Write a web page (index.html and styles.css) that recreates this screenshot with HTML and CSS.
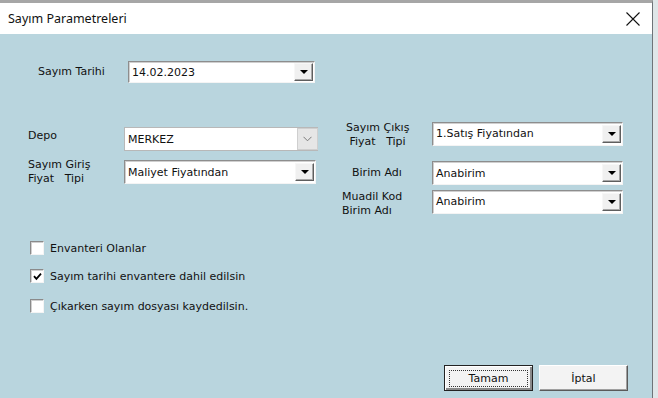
FILE: index.html
```html
<!DOCTYPE html>
<html>
<head>
    <meta charset="UTF-8">
    <title>Sayım Parametreleri</title>
    <link rel="stylesheet" href="styles.css">
</head>
<body>
    <div class="window">
        <!-- Title bar -->
        <div class="titlebar">
            <span class="title">Sayım Parametreleri</span>
            <svg class="close" width="14" height="14" viewBox="0 0 14 14">
                <path d="M0.5 0.5 L13.5 13.5 M13.5 0.5 L0.5 13.5" stroke="#111" stroke-width="1.1" fill="none"/>
            </svg>
        </div>

        <div class="content">
            <!-- Date row -->
            <div class="date-row">
                <span class="lbl date-lbl">Sayım Tarihi</span>
                <div class="combo date-combo">
                    <span class="value">14.02.2023</span>
                    <span class="drop"><i class="tri"></i></span>
                </div>
            </div>

            <div class="columns">
                <!-- Left column -->
                <div class="col left">
                    <div class="row depo-row">
                        <span class="lbl">Depo</span>
                        <div class="combo flat depo-combo">
                            <span class="value">MERKEZ</span>
                            <span class="drop flat-drop">
                                <svg width="9" height="6" viewBox="0 0 9 6"><path d="M0.5 0.8 L4.5 4.8 L8.5 0.8" stroke="#7a7a7a" stroke-width="1" fill="none"/></svg>
                            </span>
                        </div>
                    </div>
                    <div class="row giris-row">
                        <span class="lbl two">Sayım Giriş<br>Fiyat&nbsp;&nbsp; Tipi</span>
                        <div class="combo giris-combo">
                            <span class="value">Maliyet Fiyatından</span>
                            <span class="drop"><i class="tri"></i></span>
                        </div>
                    </div>
                </div>

                <!-- Right column -->
                <div class="col right">
                    <div class="row cikis-row">
                        <span class="lbl two cikis-lbl">Sayım Çıkış<br>&nbsp;Fiyat&nbsp;&nbsp; Tipi</span>
                        <div class="combo r-combo">
                            <span class="value">1.Satış Fiyatından</span>
                            <span class="drop"><i class="tri"></i></span>
                        </div>
                    </div>
                    <div class="row birim-row">
                        <span class="lbl birim-lbl">Birim Adı</span>
                        <div class="combo r-combo">
                            <span class="value">Anabirim</span>
                            <span class="drop"><i class="tri"></i></span>
                        </div>
                    </div>
                    <div class="row muadil-row">
                        <span class="lbl two muadil-lbl">Muadil Kod<br>Birim Adı</span>
                        <div class="combo r-combo">
                            <span class="value">Anabirim</span>
                            <span class="drop"><i class="tri"></i></span>
                        </div>
                    </div>
                </div>
            </div>

            <!-- Checkboxes -->
            <div class="checks">
                <div class="check">
                    <span class="box"></span>
                    <span>Envanteri Olanlar</span>
                </div>
                <div class="check">
                    <span class="box">
                        <svg width="9" height="9" viewBox="0 0 9 9"><path d="M1 4.2 L3.4 6.8 L8 1.6" stroke="#000" stroke-width="1.8" fill="none"/></svg>
                    </span>
                    <span>Sayım tarihi envantere dahil edilsin</span>
                </div>
                <div class="check">
                    <span class="box"></span>
                    <span>Çıkarken sayım dosyası kaydedilsin.</span>
                </div>
            </div>

            <!-- Buttons -->
            <div class="buttons">
                <button class="btn default"><span class="focus">Tamam</span></button>
                <button class="btn">İptal</button>
            </div>
        </div>
    </div>
</body>
</html>
```

FILE: styles.css
```css
html, body {
    margin: 0;
    height: 100%;
}
body {
    background-color: #dfe6e8;
    font-family: "DejaVu Sans", sans-serif;
    font-size: 11px;
    color: #111;
    overflow: hidden;
}
.window {
    width: 653px;
    height: 398px;
    box-sizing: border-box;
    border-top: 3px solid #a6a6a6;
    border-right: 1px solid #6e7478;
    background-color: #b9d5de;
    display: flex;
    flex-direction: column;
}
.titlebar {
    height: 31px;
    flex: none;
    background-color: #fff;
    display: flex;
    align-items: center;
    justify-content: space-between;
    padding: 0 12px 0 8px;
}
.title {
    font-family: "Noto Sans", sans-serif;
    font-size: 12.5px;
    color: #111;
}
.close {
    display: block;
}
.content {
    flex: 1;
    padding: 27px 0 0 28px;
    position: relative;
}
.lbl {
    display: block;
    line-height: 14px;
}

/* combo boxes */
.combo {
    position: relative;
    box-sizing: border-box;
    height: 22px;
    background-color: #fff;
    border: 1px solid;
    border-color: #8d8d8d #f4f4f4 #f4f4f4 #8d8d8d;
    box-shadow: inset 1px 1px 0 #cfcfcf;
    display: flex;
    align-items: center;
    justify-content: space-between;
}
.combo .value {
    padding-left: 3px;
    white-space: nowrap;
}
.drop {
    box-sizing: border-box;
    width: 19px;
    height: 18px;
    margin-right: 1px;
    background-color: #f0f0f0;
    border: 1px solid;
    border-color: #f7f7f7 #5e5e5e #5e5e5e #f7f7f7;
    box-shadow: inset -1px -1px 0 #a8a8a8;
    display: flex;
    align-items: center;
    justify-content: center;
}
.tri {
    display: block;
    width: 0;
    height: 0;
    border-left: 4px solid transparent;
    border-right: 4px solid transparent;
    border-top: 4px solid #000;
}
.combo.flat {
    border: 1px solid #b8b8b8;
    box-shadow: none;
}
.flat-drop {
    width: 21px;
    height: 22px;
    margin: -1px -1px -1px 0;
    background-color: #e6e6e6;
    border: 1px solid #cfcfcf;
    box-shadow: none;
}

/* rows */
.date-row {
    display: flex;
    align-items: center;
    padding-left: 10px;
}
.date-lbl {
    width: 90px;
}
.date-combo {
    width: 187px;
}
.columns {
    display: flex;
    margin-top: 38px;
}
.col {
    display: flex;
    flex-direction: column;
}
.row {
    display: flex;
    align-items: center;
}
.left {
    width: 312px;
    padding-top: 6px;
}
.left .lbl {
    width: 96px;
}
.depo-row .lbl {
    margin-top: -6px;
}
.depo-combo {
    width: 194px;
    height: 24px;
}
.giris-row {
    margin-top: 7px;
    align-items: flex-start;
}
.giris-combo {
    width: 192px;
    height: 24px;
    margin-top: 2px;
}
.right .lbl {
    width: 92px;
    box-sizing: border-box;
}
.cikis-lbl {
    padding-left: 6px;
}
.birim-lbl {
    padding-left: 12px;
}
.muadil-lbl {
    padding-left: 2px;
    padding-top: 8px;
}
.r-combo {
    width: 191px;
    height: 24px;
}
.cikis-row .r-combo {
    margin-top: -3px;
}
.birim-row {
    margin-top: 12px;
}
.muadil-row {
    margin-top: -3px;
}
.muadil-row .r-combo {
    margin-top: 3px;
}

/* checkboxes */
.checks {
    margin-top: 23px;
    display: flex;
    flex-direction: column;
    gap: 14px;
    padding-left: 2px;
}
.check {
    display: flex;
    align-items: center;
    gap: 6px;
}
.check:last-child {
    margin-top: 2px;
}
.box {
    box-sizing: border-box;
    width: 14px;
    height: 14px;
    background-color: #fff;
    border: 1px solid;
    border-color: #8a8a8a #f4f4f4 #f4f4f4 #8a8a8a;
    box-shadow: inset 1px 1px 0 #d0d0d0;
    display: flex;
    align-items: center;
    justify-content: center;
}

/* buttons */
.buttons {
    position: absolute;
    right: 24px;
    bottom: 7px;
    display: flex;
    gap: 6px;
}
.btn {
    box-sizing: border-box;
    width: 89px;
    height: 26px;
    font-family: "DejaVu Sans", sans-serif;
    font-size: 11px;
    color: #111;
    background-color: #f3f3f3;
    border: 1px solid;
    border-color: #fff #5a5a5a #5a5a5a #fff;
    box-shadow: inset -1px -1px 0 #a0a0a0;
    padding: 0;
}
.btn.default {
    border: 1px solid #222;
    box-shadow: inset 1px 1px 0 #fff, inset -2px -2px 0 #8a8a8a;
}
.focus {
    display: block;
    margin: 0 4px;
    border: 1px dotted #333;
    line-height: 15px;
}
```
